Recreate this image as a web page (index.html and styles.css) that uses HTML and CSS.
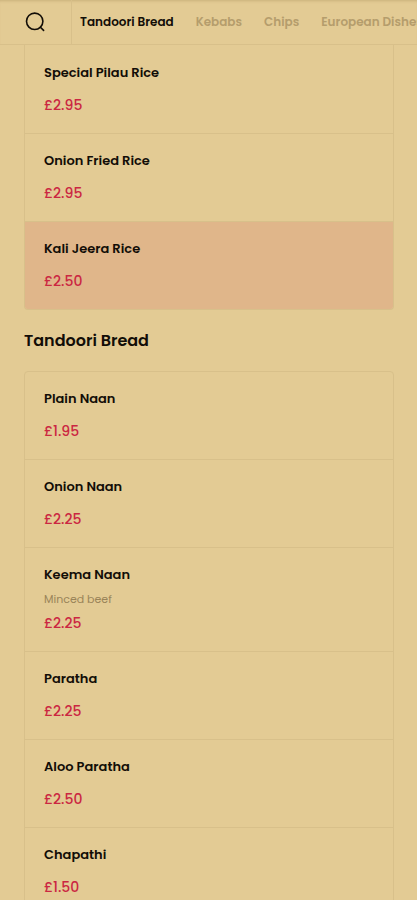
FILE: index.html
```html
<!DOCTYPE html>
<html lang="en">
<head>
<meta charset="utf-8">
<meta name="viewport" content="width=device-width, initial-scale=1">
<title>Menu</title>
<link rel="stylesheet" href="styles.css">
</head>
<body>
<header class="topbar">
  <button class="search" type="button" aria-label="Search menu">
    <svg width="22" height="22" viewBox="0 0 22 22" fill="none" stroke="currentColor" stroke-width="1.6" stroke-linecap="round" aria-hidden="true">
      <circle cx="10.7" cy="10.3" r="8.2"/>
      <path d="M16.4 16.2 19.6 19.4"/>
    </svg>
  </button>
  <nav class="tabs" aria-label="Menu categories">
    <a class="tab tab-active" href="#bread" aria-current="true">Tandoori Bread</a>
    <a class="tab" href="#kebabs">Kebabs</a>
    <a class="tab" href="#chips">Chips</a>
    <a class="tab" href="#european">European Dishes</a>
  </nav>
</header>
<main class="menu">
  <section aria-label="Rice">
    <ul class="list list-continued">
      <li class="item"><h3 class="name">Special Pilau Rice</h3><p class="price">£2.95</p></li>
      <li class="item"><h3 class="name">Onion Fried Rice</h3><p class="price">£2.95</p></li>
      <li class="item item-selected"><h3 class="name">Kali Jeera Rice</h3><p class="price">£2.50</p></li>
    </ul>
  </section>
  <section id="bread">
    <h2 class="heading">Tandoori Bread</h2>
    <ul class="list">
      <li class="item"><h3 class="name">Plain Naan</h3><p class="price">£1.95</p></li>
      <li class="item"><h3 class="name">Onion Naan</h3><p class="price">£2.25</p></li>
      <li class="item"><h3 class="name">Keema Naan</h3><p class="note">Minced beef</p><p class="price">£2.25</p></li>
      <li class="item"><h3 class="name">Paratha</h3><p class="price">£2.25</p></li>
      <li class="item"><h3 class="name">Aloo Paratha</h3><p class="price">£2.50</p></li>
      <li class="item"><h3 class="name">Chapathi</h3><p class="price">£1.50</p></li>
    </ul>
  </section>
</main>
</body>
</html>
```
FILE: styles.css
```css
:root {
  --page: #e3cb94;
  --line: #d8c08a;
  --ink: #120d07;
  --muted: #b59d6c;
  --price: #cb2742;
  --selected: #e0b68a;
}

* {
  box-sizing: border-box;
}

body,
h2,
h3,
p,
ul {
  margin: 0;
  padding: 0;
}

body {
  background: var(--page);
  color: var(--ink);
  font-family: Poppins, Inter, sans-serif;
}

.topbar {
  position: sticky;
  top: 0;
  display: flex;
  height: 45px;
  overflow: hidden;
  background: var(--page);
  border-bottom: 1px solid var(--line);
  box-shadow: inset 0 3px 3px -2px #c9b07a;
}

.search {
  flex: none;
  display: flex;
  align-items: center;
  width: 72px;
  padding: 0 0 0 24px;
  border: 0;
  border-right: 1px solid var(--line);
  background: none;
  color: var(--ink);
}

.tabs {
  display: flex;
  align-items: center;
  gap: 22px;
  padding-left: 8px;
  overflow: hidden;
}

.tab {
  flex: none;
  color: var(--muted);
  font-size: 12px;
  font-weight: 600;
  line-height: 20px;
  text-decoration: none;
}

.tab-active {
  color: var(--ink);
}

.menu {
  padding: 0 23px 24px 24px;
}

.list {
  list-style: none;
  border: 1px solid var(--line);
  border-radius: 4px;
  overflow: hidden;
}

.list-continued {
  padding-top: 1px;
  border-top: 0;
  border-radius: 0 0 4px 4px;
}

.item {
  padding: 17px 19px 18px;
}

.item + .item {
  border-top: 1px solid var(--line);
}

.item-selected {
  background: var(--selected);
}

.name {
  font-size: 13px;
  font-weight: 600;
  line-height: 20px;
}

.note {
  margin-top: 6px;
  color: #9a8459;
  font-size: 11px;
  line-height: 16px;
}

.price {
  margin-top: 12px;
  color: var(--price);
  font-size: 14px;
  font-weight: 500;
  line-height: 20px;
}

.note + .price {
  margin-top: 6px;
}

.heading {
  padding: 19px 0 18px;
  font-size: 16px;
  font-weight: 600;
  line-height: 24px;
}
```
